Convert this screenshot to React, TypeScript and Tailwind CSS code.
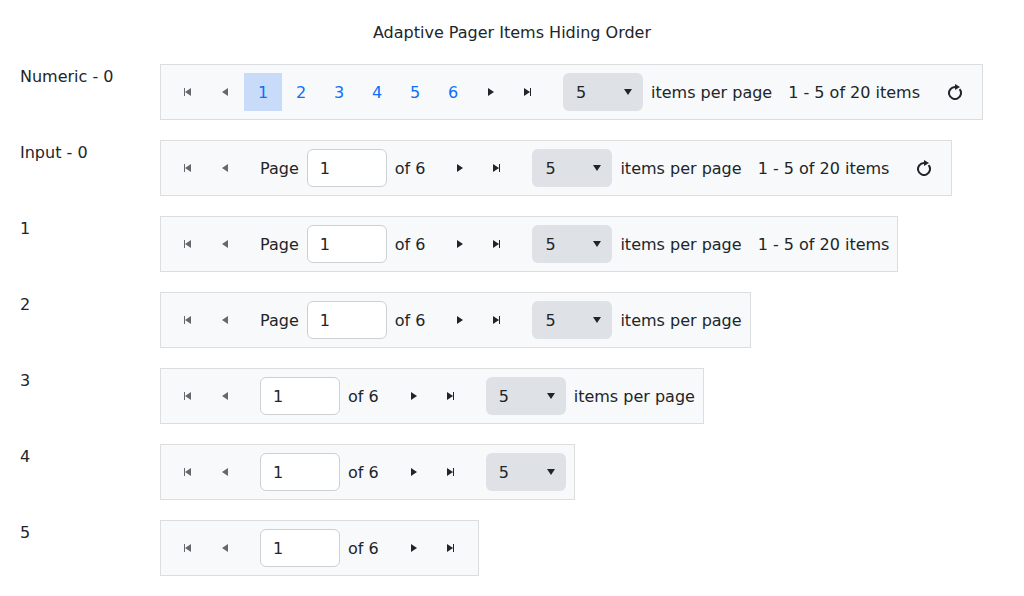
import type { ReactNode } from "react";

type Mode = "numeric" | "input";
interface RowSpec {
  label: string;
  mode: Mode;
  pageLabel?: boolean;
  sizes?: boolean;
  sizesLabel?: boolean;
  info?: boolean;
  refresh?: boolean;
}

const rows: RowSpec[] = [
  { label: "Numeric - 0", mode: "numeric", sizes: true, sizesLabel: true, info: true, refresh: true },
  { label: "Input - 0", mode: "input", pageLabel: true, sizes: true, sizesLabel: true, info: true, refresh: true },
  { label: "1", mode: "input", pageLabel: true, sizes: true, sizesLabel: true, info: true },
  { label: "2", mode: "input", pageLabel: true, sizes: true, sizesLabel: true },
  { label: "3", mode: "input", sizes: true, sizesLabel: true },
  { label: "4", mode: "input", sizes: true },
  { label: "5", mode: "input" },
];

const icons = {
  first: "M4 4h1v8H4zM11 4v8L5 8z",
  prev: "M11 4v8L5 8z",
  next: "M5 4v8l6-4z",
  last: "M10 4h1v8h-1zM4 4v8l6-4z",
  down: "M4 5h8l-4 6z",
  refresh: "M8 0l5 3-5 3z",
};

function Icon({ name }: { name: keyof typeof icons }) {
  return (
    <svg viewBox="0 0 16 16" className="block size-4 shrink-0 fill-current">
      <path d={icons[name]} />
      {name === "refresh" && (
        <path d="M8 3A6 6 0 1 0 12.6 5.15" fill="none" stroke="currentColor" strokeWidth="2" />
      )}
    </svg>
  );
}

const nudges: Partial<Record<keyof typeof icons, string>> = {
  next: "pl-[0.5px]",
  last: "pr-[0.5px]",
};

function NavButton({ name, disabled }: { name: keyof typeof icons; disabled?: boolean }) {
  return (
    <button className={`flex h-[38px] w-[37.5px] shrink-0 items-center justify-center ${nudges[name] ?? ""} ${disabled ? "text-[#66696c]" : "text-[#212529]"}`}>
      <Icon name={name} />
    </button>
  );
}

function Text({ children }: { children: ReactNode }) {
  return <span className="pt-0.5 whitespace-nowrap">{children}</span>;
}

function Pager({ spec }: { spec: RowSpec }) {
  return (
    <div className="flex h-14 w-fit items-center border border-[#dbdddf] bg-[#f8f9fa] p-2">
      <NavButton name="first" disabled />
      <NavButton name="prev" disabled />
      {spec.mode === "numeric" ? (
        <div className="flex">
          {[1, 2, 3, 4, 5, 6].map((n) => (
            <button key={n} className={`h-[38px] w-[38px] pt-0.5 text-[#0d6efd] ${n === 1 ? "bg-[#c8dcfa]" : ""}`}>
              {n}
            </button>
          ))}
        </div>
      ) : (
        <div className="mx-4 flex items-center gap-2">
          {spec.pageLabel && <Text>Page</Text>}
          <input readOnly value="1" className="h-[38px] w-20 rounded-[6px] border border-[#ced0d2] bg-white px-3 outline-none" />
          <Text>of 6</Text>
        </div>
      )}
      <NavButton name="next" />
      <NavButton name="last" />
      {spec.sizes && (
        <div className="ml-4 flex items-center gap-2">
          <div className="flex h-[38px] w-20 items-center justify-between rounded-[6px] bg-[#dee2e6] pr-[7px] pl-[13px]">
            <Text>5</Text>
            <Icon name="down" />
          </div>
          {spec.sizesLabel && <Text>items per page</Text>}
        </div>
      )}
      {spec.info && <div className="ml-4 flex"><Text>1 - 5 of 20 items</Text></div>}
      {spec.refresh && <div className="ml-4 flex"><NavButton name="refresh" /></div>}
    </div>
  );
}

export default function App() {
  return (
    <main className="h-[596px] overflow-hidden bg-white px-5 pt-5 font-['DejaVu_Sans',sans-serif] text-base leading-6 text-[#212529]">
      <h1 className="mb-[19px] pt-px text-center">Adaptive Pager Items Hiding Order</h1>
      <div className="flex flex-col gap-5">
        {rows.map((row) => (
          <div key={row.label} className="flex items-start">
            <div className="w-[140px] shrink-0 pt-px">{row.label}</div>
            <Pager spec={row} />
          </div>
        ))}
      </div>
    </main>
  );
}
